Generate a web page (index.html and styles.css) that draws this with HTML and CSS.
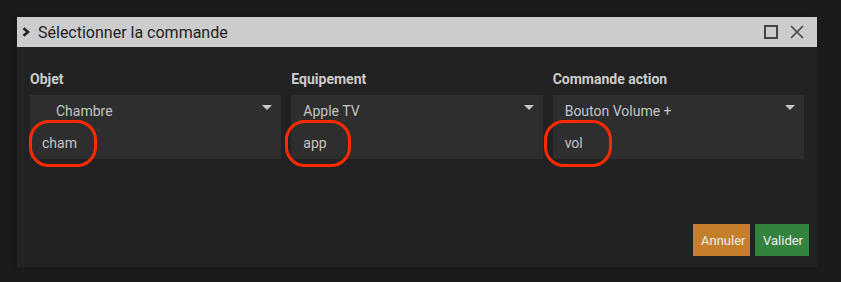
FILE: index.html
```html
<!DOCTYPE html>
<html lang="fr">
<head>
<meta charset="utf-8">
<link rel="stylesheet" href="styles.css">
</head>
<body>
<div class="dialog">
  <div class="titlebar">
    <svg class="chev" width="8" height="10" viewBox="0 0 8 10"><polyline points="1.5,1.2 6,5 1.5,8.8" fill="none" stroke="#222" stroke-width="2.6"/></svg>
    <span class="title">Sélectionner la commande</span>
    <div class="win-icons">
      <svg width="14" height="14" viewBox="0 0 14 14"><rect x="1" y="1" width="12" height="12" fill="none" stroke="#444" stroke-width="2"/></svg>
      <svg width="14" height="14" viewBox="0 0 14 14"><path d="M1 1 L13 13 M13 1 L1 13" stroke="#444" stroke-width="1.6" fill="none"/></svg>
    </div>
  </div>
  <div class="content">
    <div class="cols">
      <div class="col">
        <div class="label">Objet</div>
        <div class="box">
          <div class="sel"><span class="indent">Chambre</span><span class="caret"></span></div>
          <div class="inp">cham</div>
          <div class="mark m1"></div>
        </div>
      </div>
      <div class="col">
        <div class="label">Equipement</div>
        <div class="box">
          <div class="sel"><span>Apple TV</span><span class="caret"></span></div>
          <div class="inp">app</div>
          <div class="mark m2"></div>
        </div>
      </div>
      <div class="col">
        <div class="label">Commande action</div>
        <div class="box">
          <div class="sel"><span>Bouton Volume +</span><span class="caret"></span></div>
          <div class="inp">vol</div>
          <div class="mark m3"></div>
        </div>
      </div>
    </div>
  </div>
  <div class="footer">
    <button class="btn cancel">Annuler</button>
    <button class="btn ok">Valider</button>
  </div>
</div>
</body>
</html>
```
FILE: styles.css
```css
html, body {
  margin: 0;
  padding: 0;
  background: #1a1c1c;
  width: 841px;
  height: 282px;
  overflow: hidden;
  font-family: Roboto, "Liberation Sans", sans-serif;
}
.dialog {
  margin: 17px 0 0 17px;
  width: 800px;
  height: 250px;
  background: #222222;
  display: flex;
  flex-direction: column;
  box-shadow: -4px 0 4px rgba(0,0,0,0.15);
}
.titlebar {
  height: 30px;
  background: #cccccc;
  display: flex;
  align-items: center;
  padding-left: 5px;
  color: #222;
}
.chev { margin-right: 8px; }
.title { font-size: 16px; }
.win-icons {
  margin-left: auto;
  display: flex;
  gap: 12px;
  margin-right: 13px;
}
.content {
  flex: 1;
  padding: 24px 13px 0 13px;
}
.cols {
  display: grid;
  grid-template-columns: repeat(3, 1fr);
  gap: 10px;
}
.label {
  font-size: 14px;
  font-weight: bold;
  color: #cccccc;
  line-height: 16px;
  height: 24px;
}
.box {
  position: relative;
  background: #2e2e2e;
  height: 64px;
}
.sel {
  height: 32px;
  display: flex;
  align-items: center;
  padding: 0 12px;
  color: #c4c4c4;
  font-size: 14px;
}
.indent { padding-left: 14px; }
.caret {
  margin-left: auto;
  width: 0;
  height: 0;
  border-left: 5px solid transparent;
  border-right: 5px solid transparent;
  border-top: 5px solid #c8c8c8;
  margin-top: -8px;
  margin-right: -3px;
}
.inp {
  height: 32px;
  display: flex;
  align-items: center;
  padding: 0 12px;
  color: #c4c4c4;
  font-size: 14px;
}
.mark {
  position: absolute;
  top: 25px;
  height: 41px;
  border: 3px solid #ff2a00;
  border-radius: 20px;
}
.m1 { left: -1px; width: 62px; }
.m2 { left: -6px; width: 60px; }
.m3 { left: -9px; width: 62px; }
.footer {
  display: flex;
  justify-content: flex-end;
  gap: 5px;
  padding: 0 8px 11px 0;
}
.btn {
  border: none;
  height: 32px;
  font-family: Roboto, "Liberation Sans", sans-serif;
  font-size: 13px;
  color: #eeeeee;
  padding: 0 8px;
}
.cancel { background: #c57f2b; width: 57px; }
.ok { background: #33833f; width: 54px; }
```
